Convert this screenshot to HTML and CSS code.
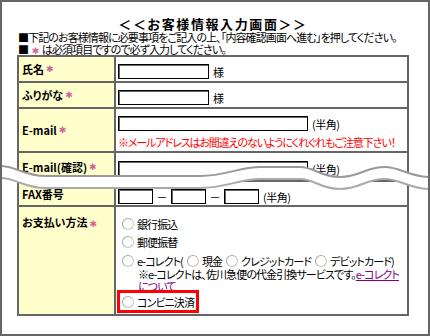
FILE: index.html
```html
<!DOCTYPE html>
<html lang="ja">
<head>
    <meta charset="UTF-8">
    <title>お客様情報入力画面</title>
    <link rel="stylesheet" href="styles.css">
</head>
<body>
    <div class="frame">
        <h1 class="title">＜＜お客様情報入力画面＞＞</h1>
        <p class="note">■下記のお客様情報に必要事項をご記入の上、「内容確認画面へ進む」を押してください。</p>
        <p class="note">■ <span class="req">✱</span> は必須項目ですので必ず入力してください。</p>

        <div class="form">
            <div class="label">氏名<span class="req">✱</span></div>
            <div class="field">
                <div class="line"><input type="text" class="w-name"><span class="unit">様</span></div>
            </div>

            <div class="label">ふりがな<span class="req">✱</span></div>
            <div class="field">
                <div class="line"><input type="text" class="w-name"><span class="unit">様</span></div>
            </div>

            <div class="label">E-mail<span class="req">✱</span></div>
            <div class="field">
                <div class="line"><input type="text" class="w-mail"><span class="unit">(半角)</span></div>
                <div class="warn">※メールアドレスはお間違えのないようにくれぐれもご注意下さい！</div>
            </div>

            <div class="label">E-mail(確認)<span class="req">✱</span></div>
            <div class="field confirm">
                <div class="line"><input type="text" class="w-mail"><span class="unit">(半角)</span></div>
            </div>

            <div class="label">FAX番号</div>
            <div class="field">
                <div class="line">
                    <input type="text" class="w-fax"><span class="dash">－</span>
                    <input type="text" class="w-fax"><span class="dash">－</span>
                    <input type="text" class="w-fax"><span class="unit">(半角)</span>
                </div>
            </div>

            <div class="label top last">お支払い方法<span class="req">✱</span></div>
            <div class="field pay last">
                <label class="opt"><input type="radio" name="pay">銀行振込</label>
                <label class="opt"><input type="radio" name="pay">郵便振替</label>
                <div class="opt ecollect">
                    <label><input type="radio" name="pay">e-コレクト(</label>
                    <label><input type="radio" name="sub">現金</label>
                    <label><input type="radio" name="sub">クレジットカード</label>
                    <label><input type="radio" name="sub">デビットカード)</label>
                </div>
                <div class="memo">※e-コレクトは、佐川急便の代金引換サービスです。<a href="#">e-コレクト<br>について</a></div>
                <label class="opt mark"><input type="radio" name="pay">コンビニ決済</label>
            </div>
        </div>

        <!-- 途中省略の波線 -->
        <svg class="tear" width="430" height="40" viewBox="0 0 430 40">
            <path fill="#fff" d="M0,11 C15,11 25,21 45,21 L200,21 C225,21 240,12 260,12 L300,12 C315,12 320,22 340,22 C360,22 365,12 385,12 C400,12 410,22 430,22 L430,34 C410,34 400,24 385,24 C365,24 360,34 340,34 C320,34 315,24 300,24 L260,24 C240,24 225,33 200,33 L45,33 C25,33 15,23 0,23 Z"/>
            <path fill="none" stroke="#999" stroke-width="2" d="M0,11 C15,11 25,21 45,21 L200,21 C225,21 240,12 260,12 L300,12 C315,12 320,22 340,22 C360,22 365,12 385,12 C400,12 410,22 430,22"/>
            <path fill="none" stroke="#aaa" stroke-width="2" d="M0,23 C15,23 25,33 45,33 L200,33 C225,33 240,24 260,24 L300,24 C315,24 320,34 340,34 C360,34 365,24 385,24 C400,24 410,34 430,34"/>
        </svg>
    </div>
</body>
</html>
```

FILE: styles.css
```css
body {
    margin: 0;
    font-family: "Noto Sans CJK JP", sans-serif;
    font-size: 11px;
    color: #000;
    font-feature-settings: "palt";
}
.frame {
    position: relative;
    width: 430px;
    height: 336px;
    box-sizing: border-box;
    border: 2px solid #666;
    padding: 14px 0 0 15px;
    overflow: hidden;
}
.title {
    margin: 0;
    width: 392px;
    text-align: center;
    font-size: 13px;
    line-height: 15px;
    letter-spacing: 1.6px;
    font-weight: bold;
}
.note {
    height: 12px;
    margin: 0 0 0 1px;
    line-height: 12px;
    letter-spacing: -0.9px;
    white-space: nowrap;
}
.req {
    color: #cc6699;
    font-family: "DejaVu Sans", sans-serif;
    font-size: 9px;
    font-weight: normal;
    letter-spacing: 0;
    margin: 0 1px 0 2px;
}
.note .req {
    line-height: 0;
}
.form {
    display: grid;
    grid-template-columns: 97px 1fr;
    grid-template-rows: 26px 26px 44px 29px 25px 107px;
    width: 392px;
    box-sizing: border-box;
    border: 2px solid #666;
}
.label {
    display: flex;
    align-items: center;
    padding-left: 3px;
    background-color: #ffffcc;
    border-right: 2px solid #666;
    border-bottom: 2px solid #666;
    font-weight: bold;
    white-space: nowrap;
}
.label.top {
    align-items: baseline;
    padding-top: 7px;
}
.field {
    padding: 7px 0 0 2px;
    border-bottom: 2px solid #666;
}
.field.confirm {
    padding-top: 8px;
}
.last {
    border-bottom: none;
}
.line {
    display: flex;
    align-items: center;
    height: 15px;
}
.line input {
    height: 15px;
    margin: 0;
    padding: 0 2px;
    box-sizing: border-box;
    border: 1px solid #000;
    box-shadow: inset 1px 1px 0 #666;
    font-size: 11px;
}
.w-name { width: 91px; }
.w-mail { width: 190px; }
.w-fax { width: 35px; }
.unit {
    margin-left: 4px;
    letter-spacing: -0.5px;
}
.dash {
    width: 18px;
    text-align: center;
}
.warn {
    margin-top: 5px;
    line-height: 12px;
    color: #ff0000;
    letter-spacing: -1.1px;
    white-space: nowrap;
}
.pay {
    padding-top: 8px;
    padding-left: 2px;
}
.opt {
    display: flex;
    align-items: center;
    height: 18px;
    letter-spacing: -0.9px;
    white-space: nowrap;
}
.opt label {
    display: flex;
    align-items: center;
    margin-right: 3px;
}
.opt input {
    appearance: none;
    flex: none;
    width: 12px;
    height: 12px;
    margin: 0 3px 0 4px;
    border: 1px solid #c4c4c4;
    border-top-color: #aaa;
    border-left-color: #aaa;
    border-radius: 50%;
    background-color: #fff;
}
.opt label + label input {
    margin-left: 1px;
}
.opt.ecollect {
    height: 14px;
    margin-top: 3px;
}
.memo {
    padding-left: 20px;
    line-height: 12px;
    letter-spacing: -0.9px;
}
.memo a {
    color: #800080;
}
.opt.mark {
    width: 76px;
    height: 17px;
    margin: 1px 0 0 2px;
    outline: 3px solid #ff0000;
}
.opt.mark input {
    margin-left: 2px;
}
.tear {
    position: absolute;
    left: -2px;
    top: 153px;
}
```
